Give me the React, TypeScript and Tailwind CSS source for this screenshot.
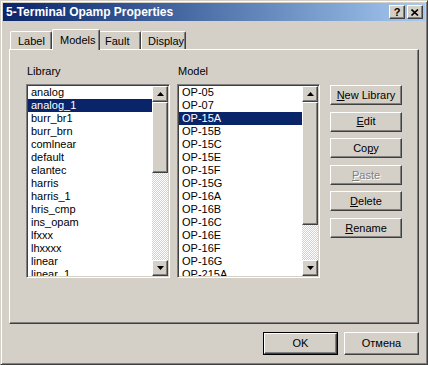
import React from "react";

const libs = ["analog","analog_1","burr_br1","burr_brn","comlnear","default","elantec","harris","harris_1","hris_cmp","ins_opam","lfxxx","lhxxxx","linear","linear_1"];
const models = ["OP-05","OP-07","OP-15A","OP-15B","OP-15C","OP-15E","OP-15F","OP-15G","OP-16A","OP-16B","OP-16C","OP-16E","OP-16F","OP-16G","OP-215A"];

const raised = "border border-t-white border-l-white border-r-[#404040] border-b-[#404040] shadow-[inset_-1px_-1px_#808080] bg-[#d4d0c8]";

function Arrow({ down }: { down?: boolean }) {
  return (
    <div className={`w-[16px] h-[16px] flex items-center justify-center ${raised}`}>
      <svg width="7" height="4" viewBox="0 0 7 4">
        {down ? <path d="M0 0H7L3.5 4Z" fill="#000" /> : <path d="M0 4H7L3.5 0Z" fill="#000" />}
      </svg>
    </div>
  );
}

function ListBox({ items, sel, thumb, pad }: { items: string[]; sel: number; thumb: number; pad: number }) {
  return (
    <div className="h-[194px] bg-white border border-t-[#808080] border-l-[#808080] border-b-white border-r-white shadow-[inset_1px_1px_#404040,inset_-1px_-1px_#d4d0c8] p-[1px] flex">
      <div className="flex-1 overflow-hidden">
        {items.map((t, i) => (
          <div
            key={t}
            className={`h-[13px] leading-[13px] whitespace-nowrap ${i === sel ? "bg-[#0a246a] text-white" : "text-black"}`}
            style={{ paddingLeft: pad }}
          >
            {t}
          </div>
        ))}
      </div>
      <div className="w-[16px] flex flex-col bg-[repeating-conic-gradient(#d4d0c8_0%_25%,#ffffff_0%_50%)] bg-[length:2px_2px]">
        <Arrow />
        <div className={`w-[16px] ${raised}`} style={{ height: thumb }} />
        <div className="flex-1" />
        <Arrow down />
      </div>
    </div>
  );
}

function Btn({ children, disabled }: { children: React.ReactNode; disabled?: boolean }) {
  return (
    <div
      className={`h-[20px] w-[72px] flex items-center justify-center ${raised} ${disabled ? "text-[#808080] [text-shadow:1px_1px_#ffffff]" : "text-black"}`}
    >
      {children}
    </div>
  );
}

const U = ({ c }: { c: string }) => <span className="underline underline-offset-[1px]">{c}</span>;

export default function App() {
  return (
    <div className="w-[428px] h-[365px] bg-[#d4d0c8] border border-t-[#d4d0c8] border-l-[#d4d0c8] border-r-[#404040] border-b-[#404040] shadow-[inset_1px_1px_#ffffff,inset_-1px_-1px_#808080] p-[2px] flex flex-col font-['Liberation_Sans',Arial,sans-serif] text-[11px] text-black">
      <div className="h-[18px] bg-gradient-to-r from-[#0a246a] to-[#a6caf0] flex items-center pl-[3px] pr-[2px]">
        <span className="text-white font-bold text-[12px] flex-1 leading-[18px]">5-Terminal Opamp Properties</span>
        <div className="flex gap-[2px]">
          <div className={`w-[16px] h-[14px] flex items-center justify-center font-bold text-[11px] leading-none ${raised}`}>?</div>
          <div className={`w-[16px] h-[14px] flex items-center justify-center ${raised}`}>
            <svg width="8" height="7" viewBox="0 0 8 7">
              <path d="M0.5 0.5L7 6.5M7 0.5L0.5 6.5" stroke="#000" strokeWidth="1.6" />
            </svg>
          </div>
        </div>
      </div>

      <div className="mt-[8px] h-[20px] flex items-end pl-[7px] relative z-10">
        <div className="w-[42px] h-[18px] border-l border-t border-white rounded-tl-[2px] border-r border-r-[#404040] shadow-[inset_-1px_0_#808080] rounded-tr-[2px] flex items-center pl-[7px] pt-[1px]">Label</div>
        <div className="w-[48px] h-[21px] -mb-[1px] bg-[#d4d0c8] border-l border-t border-white rounded-tl-[2px] border-r border-r-[#404040] shadow-[inset_-1px_0_#808080] rounded-tr-[2px] flex items-start pl-[7px] pt-[2px]">Models</div>
        <div className="w-[41px] h-[18px] border-t border-white border-r border-r-[#404040] shadow-[inset_-1px_0_#808080] rounded-tr-[2px] flex items-center pl-[5px] pt-[1px]">Fault</div>
        <div className="w-[45px] h-[18px] border-l border-t border-white rounded-tl-[2px] border-r border-r-[#404040] shadow-[inset_-1px_0_#808080] rounded-tr-[2px] flex items-center pl-[6px] pt-[1px]">Display</div>
      </div>

      <div className="mx-[6px] h-[275px] border border-t-white border-l-white border-r-[#404040] border-b-[#404040] shadow-[inset_-1px_-1px_#808080] pt-[15px] pl-[16px] flex">
        <div className="w-[144px] flex flex-col">
          <div className="h-[13px] leading-[13px] pl-[1px]">Library</div>
          <div className="mt-[6px]">
            <ListBox items={libs} sel={1} thumb={71} pad={3} />
          </div>
        </div>
        <div className="w-[143px] ml-[7px] flex flex-col">
          <div className="h-[13px] leading-[13px] pl-[1px]">Model</div>
          <div className="mt-[6px]">
            <ListBox items={models} sel={2} thumb={123} pad={3} />
          </div>
        </div>
        <div className="ml-[10px] mt-[20px] flex flex-col gap-[6.6px]">
          <Btn><U c="N" />ew Library</Btn>
          <Btn><U c="E" />dit</Btn>
          <Btn>Co<U c="p" />y</Btn>
          <Btn disabled><U c="P" />aste</Btn>
          <Btn><U c="D" />elete</Btn>
          <Btn><U c="R" />ename</Btn>
        </div>
      </div>

      <div className="mt-[8px] flex justify-end gap-[6px] pr-[6px]">
        <div className="w-[75px] h-[23px] border border-black">
          <div className={`w-full h-full flex items-center justify-center ${raised}`}>OK</div>
        </div>
        <div className={`w-[75px] h-[23px] flex items-center justify-center ${raised}`}>Отмена</div>
      </div>
    </div>
  );
}
